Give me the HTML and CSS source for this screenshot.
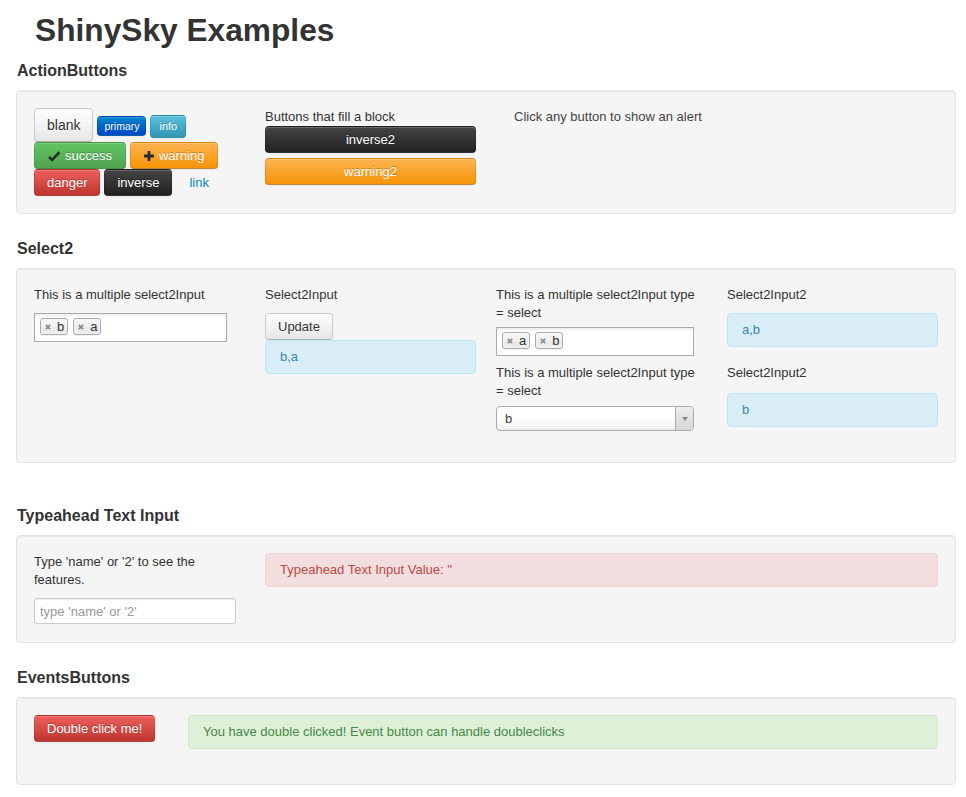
FILE: index.html
```html
<!DOCTYPE html>
<html>
<head>
<meta charset="utf-8">
<title>ShinySky Examples</title>
<link rel="stylesheet" href="styles.css">
</head>
<body>
<div class="container">
  <h1 class="title">ShinySky Examples</h1>

  <h4 class="section">ActionButtons</h4>
  <div class="well">
    <div class="row4">
      <div class="col">
        <div class="btn-line">
          <button class="btn btn-large">blank</button>
          <button class="btn btn-mini btn-primary">primary</button>
          <button class="btn btn-small btn-info">info</button>
        </div>
        <div class="btn-line">
          <button class="btn btn-success btn-icon"><svg class="icon icon-ok" viewBox="0 0 14 14" width="14" height="14"><path d="M2 8 L5.2 11 L12.5 3.2" fill="none" stroke="#2b2b2b" stroke-width="2.6"/></svg>success</button>
          <button class="btn btn-warning btn-icon"><svg class="icon icon-plus" viewBox="0 0 12 14" width="12" height="14"><path d="M1 5.6 H11 V8.4 H1 Z M4.6 2 H7.4 V12 H4.6 Z" fill="#2b2b2b"/></svg>warning</button>
        </div>
        <div class="btn-line">
          <button class="btn btn-danger">danger</button>
          <button class="btn btn-inverse">inverse</button>
          <button class="btn btn-link">link</button>
        </div>
      </div>
      <div class="col">
        <div class="label">Buttons that fill a block</div>
        <button class="btn btn-block btn-inverse">inverse2</button>
        <button class="btn btn-block btn-warning">warning2</button>
      </div>
      <div class="col col-note">Click any button to show an alert</div>
    </div>
  </div>

  <h4 class="section">Select2</h4>
  <div class="well">
    <div class="row4">
      <div class="col">
        <div class="label">This is a multiple select2Input</div>
        <div class="s2-multi gap9">
          <span class="chip"><svg class="chip-x" viewBox="0 0 6 6" width="6" height="6"><path d="M0.8 0.8 L5.2 5.2 M5.2 0.8 L0.8 5.2" stroke="#8a8a8a" stroke-width="1.7"/></svg>b</span>
          <span class="chip"><svg class="chip-x" viewBox="0 0 6 6" width="6" height="6"><path d="M0.8 0.8 L5.2 5.2 M5.2 0.8 L0.8 5.2" stroke="#8a8a8a" stroke-width="1.7"/></svg>a</span>
        </div>
      </div>
      <div class="col">
        <div class="label">Select2Input</div>
        <button class="btn btn-update">Update</button>
        <div class="alert alert-info">b,a</div>
      </div>
      <div class="col">
        <div class="label label-narrow">This is a multiple select2Input type = select</div>
        <div class="s2-multi gap5 s2-wide">
          <span class="chip"><svg class="chip-x" viewBox="0 0 6 6" width="6" height="6"><path d="M0.8 0.8 L5.2 5.2 M5.2 0.8 L0.8 5.2" stroke="#8a8a8a" stroke-width="1.7"/></svg>a</span>
          <span class="chip"><svg class="chip-x" viewBox="0 0 6 6" width="6" height="6"><path d="M0.8 0.8 L5.2 5.2 M5.2 0.8 L0.8 5.2" stroke="#8a8a8a" stroke-width="1.7"/></svg>b</span>
        </div>
        <div class="label label-narrow label-next">This is a multiple select2Input type = select</div>
        <div class="s2-single">
          <span class="s2-value">b</span>
          <span class="s2-arrow"><svg viewBox="0 0 6 4" width="6" height="4"><path d="M0 0 H6 L3 4 Z" fill="#888"/></svg></span>
        </div>
      </div>
      <div class="col">
        <div class="label">Select2Input2</div>
        <div class="alert alert-info gap9">a,b</div>
        <div class="label label-next2">Select2Input2</div>
        <div class="alert alert-info gap11 alert-last">b</div>
      </div>
    </div>
  </div>

  <h4 class="section section-spaced">Typeahead Text Input</h4>
  <div class="well well-typeahead">
    <div class="row-typeahead">
      <div class="col">
        <div class="label">Type 'name' or '2' to see the features.</div>
        <input class="text-input gap9" type="text" placeholder="type 'name' or '2'">
      </div>
      <div class="alert alert-error">Typeahead Text Input Value: ''</div>
    </div>
  </div>

  <h4 class="section">EventsButtons</h4>
  <div class="well">
    <div class="row-events">
      <div><button class="btn btn-danger">Double click me!</button></div>
      <div class="alert alert-success alert-last">You have double clicked! Event button can handle doubleclicks</div>
    </div>
  </div>
</div>
</body>
</html>
```

FILE: styles.css
```css
* { box-sizing: border-box; }

body {
  margin: 0;
  font-family: "Liberation Sans", Arial, Helvetica, sans-serif;
  font-size: 13px;
  line-height: 18px;
  color: #333;
  background: #fff;
}

.container {
  width: 940px;
  margin-left: 16px;
  padding-top: 12px;
}

.title {
  margin: 0 0 13px 19px;
  font-size: 31.7px;
  line-height: 36px;
  font-weight: bold;
  color: #333;
}

.section {
  margin: 0 0 9px 1px;
  font-size: 16px;
  line-height: 20px;
  font-weight: bold;
  color: #333;
}

.section-spaced { padding-top: 18px; }

.well {
  background: #f5f5f5;
  border: 1px solid #e3e3e3;
  border-radius: 4px;
  box-shadow: inset 0 1px 1px rgba(0, 0, 0, 0.05);
  padding: 17px;
  margin-bottom: 25px;
}

.well-typeahead { padding-bottom: 18px; }

.row4 {
  display: grid;
  grid-template-columns: repeat(4, 211px);
  column-gap: 20px;
  align-items: start;
}

.col { display: flex; flex-direction: column; align-items: stretch; }
.col-note { display: block; padding-left: 18px; color: #444; }

.label { color: #333; }
.label-narrow { max-width: 205px; }
.label-next { margin-top: 8px; }
.label-next2 { margin-top: 17px; }

.gap5 { margin-top: 5px; }
.gap9 { margin-top: 9px; }
.gap11 { margin-top: 11px; }

/* Buttons */
.btn-line {
  display: flex;
  align-items: baseline;
  gap: 4px;
}

.btn {
  display: inline-block;
  margin: 0;
  padding: 4px 12px;
  font-family: "Liberation Sans", Arial, Helvetica, sans-serif;
  font-size: 13px;
  line-height: 17px;
  color: #333;
  text-align: center;
  text-shadow: 0 1px 1px rgba(255, 255, 255, 0.75);
  background: linear-gradient(#ffffff, #e6e6e6);
  border: 1px solid #cccccc;
  border-bottom-color: #b3b3b3;
  border-radius: 4px;
  box-shadow: inset 0 1px 0 rgba(255, 255, 255, 0.2), 0 1px 2px rgba(0, 0, 0, 0.05);
  cursor: pointer;
}

.btn-update { align-self: flex-start; margin-top: 9px; }

.btn-large {
  padding: 8px 12px 7px;
  font-size: 14px;
  line-height: 17px;
}

.btn-small {
  padding: 2px 8px;
  font-size: 11px;
  line-height: 17px;
}

.btn-mini {
  padding: 2px 6px;
  font-size: 10.5px;
  line-height: 14px;
}

.btn-primary, .btn-info, .btn-success, .btn-warning, .btn-danger, .btn-inverse {
  color: #fff;
  text-shadow: 0 -1px 0 rgba(0, 0, 0, 0.25);
  border-color: rgba(0, 0, 0, 0.1) rgba(0, 0, 0, 0.1) rgba(0, 0, 0, 0.25);
}

.btn-primary { background: linear-gradient(#0088cc, #0044cc); }
.btn-info { background: linear-gradient(#5bc0de, #2f96b4); }
.btn-success { background: linear-gradient(#62c462, #51a351); }
.btn-warning { background: linear-gradient(#fbb450, #f89406); }
.btn-danger { background: linear-gradient(#ee5f5b, #bd362f); }
.btn-inverse { background: linear-gradient(#444444, #222222); }

.btn-link {
  color: #0088cc;
  background: none;
  border-color: transparent;
  box-shadow: none;
  text-shadow: none;
}

.btn-icon {
  display: inline-flex;
  align-items: center;
  gap: 4px;
}
.btn-success.btn-icon { padding-right: 13px; }

.icon { display: block; flex: none; }

.btn-block {
  display: block;
  width: 100%;
}
.btn-block + .btn-block { margin-top: 5px; }

/* Select2 */
.s2-multi {
  display: flex;
  align-items: flex-start;
  gap: 5px;
  width: 193px;
  height: 29px;
  padding: 4px 5px 0;
  background: linear-gradient(#eeeeee 1%, #ffffff 15%);
  border: 1px solid #aaaaaa;
}
.s2-wide { width: 198px; }

.chip {
  display: inline-flex;
  align-items: center;
  gap: 6px;
  height: 17px;
  padding: 0 3px 0 4px;
  font-size: 13px;
  line-height: 15px;
  color: #333;
  background: linear-gradient(#f4f4f4 20%, #f0f0f0 50%, #e8e8e8 52%, #eeeeee 100%);
  border: 1px solid #aaaaaa;
  border-radius: 3px;
  box-shadow: 0 0 2px #ffffff inset, 0 1px 0 rgba(0, 0, 0, 0.05);
}

.chip-x { display: block; flex: none; }

.s2-single {
  display: flex;
  align-items: stretch;
  width: 198px;
  height: 25px;
  margin-top: 6px;
  background: linear-gradient(#ffffff 45%, #eeeeee 100%);
  border: 1px solid #aaaaaa;
  border-radius: 4px;
  overflow: hidden;
}

.s2-value {
  flex: 1;
  padding-left: 8px;
  line-height: 23px;
  color: #444;
}

.s2-arrow {
  display: flex;
  align-items: center;
  justify-content: center;
  width: 18px;
  background: linear-gradient(#eeeeee, #d6d6d6);
  border-left: 1px solid #aaaaaa;
}

/* Alerts */
.alert {
  padding: 7px 14px;
  line-height: 18px;
  border: 1px solid;
  border-radius: 4px;
}

.alert-info {
  color: #3a87ad;
  background: #d9edf7;
  border-color: #bce8f1;
}

.alert-error {
  color: #b94a48;
  background: #f2dede;
  border-color: #eed3d7;
}

.alert-success {
  color: #468847;
  background: #dff0d8;
  border-color: #d6e9c6;
}

.alert-last { margin-bottom: 18px; }

/* Typeahead */
.row-typeahead {
  display: grid;
  grid-template-columns: 211px 1fr;
  column-gap: 20px;
  align-items: start;
}

.text-input {
  width: 202px;
  height: 26px;
  padding: 0 5px;
  font-family: "Liberation Sans", Arial, Helvetica, sans-serif;
  font-size: 13px;
  color: #555;
  background: #fff;
  border: 1px solid #cccccc;
  border-radius: 3px;
  box-shadow: inset 0 1px 1px rgba(0, 0, 0, 0.075);
}
.text-input::placeholder { color: #999; }

.row-events {
  display: grid;
  grid-template-columns: 134px 1fr;
  column-gap: 20px;
  align-items: start;
}
```
